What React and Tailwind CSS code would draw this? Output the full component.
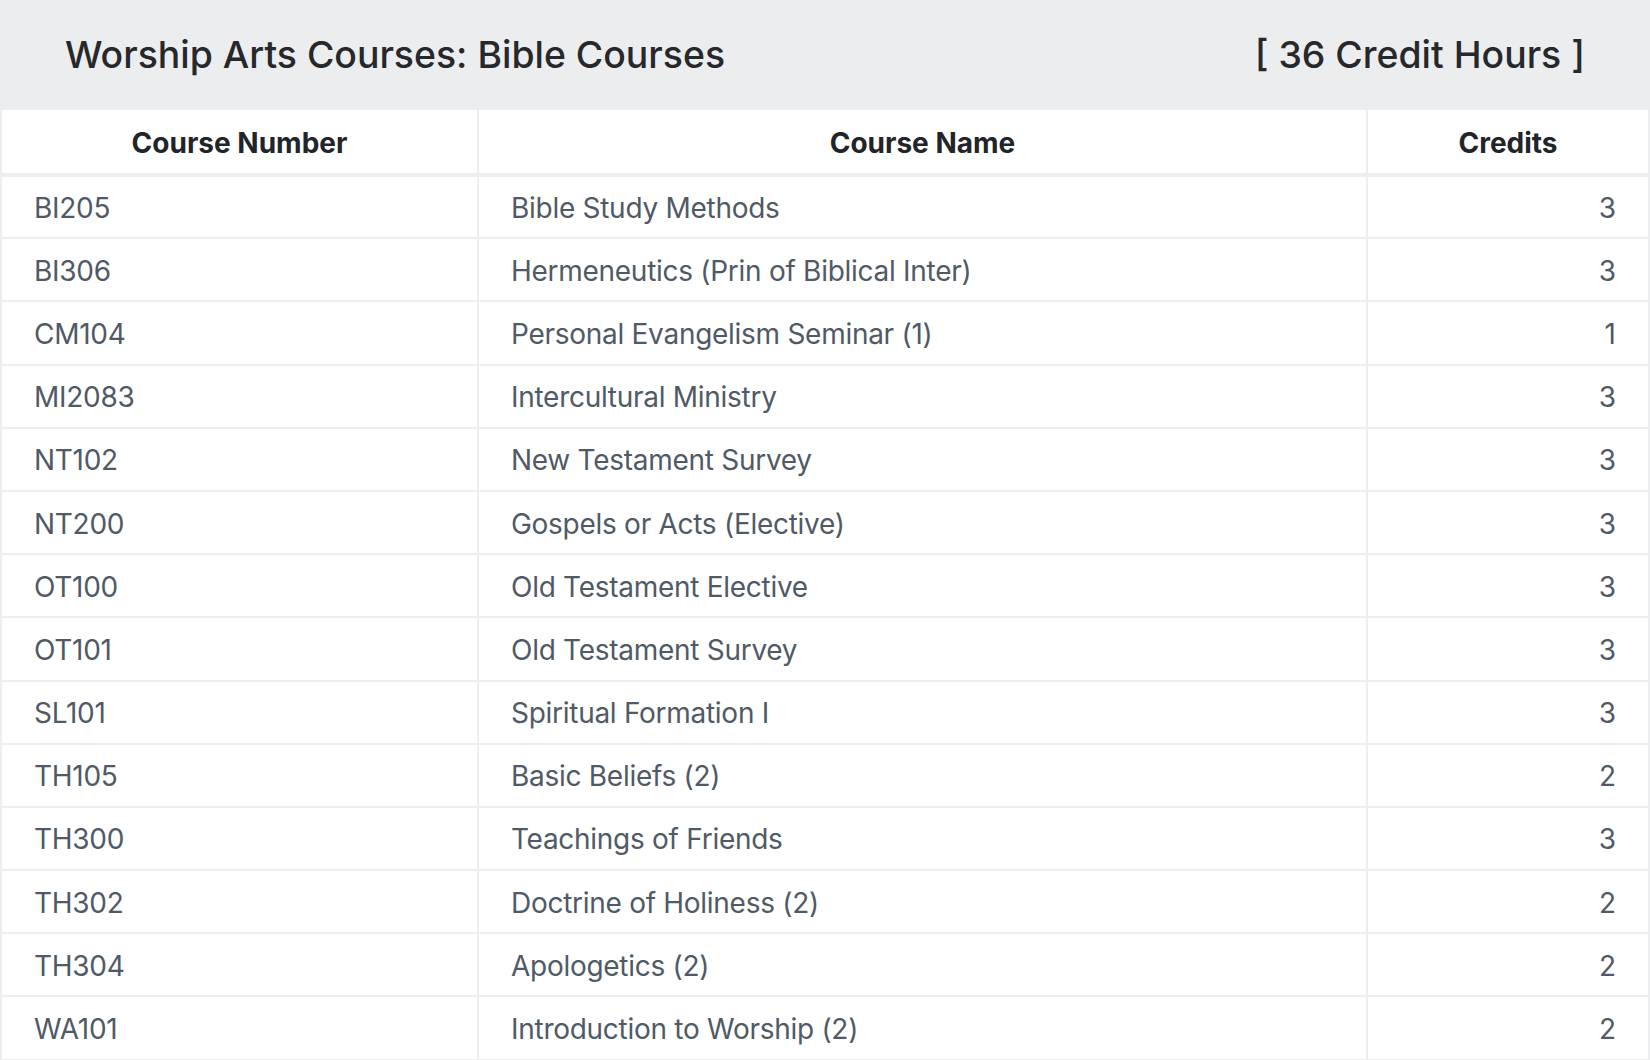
import React from 'react';

const courses = [
    { number: 'BI205', name: 'Bible Study Methods', credits: 3 },
    { number: 'BI306', name: 'Hermeneutics (Prin of Biblical Inter)', credits: 3 },
    { number: 'CM104', name: 'Personal Evangelism Seminar (1)', credits: 1 },
    { number: 'MI2083', name: 'Intercultural Ministry', credits: 3 },
    { number: 'NT102', name: 'New Testament Survey', credits: 3 },
    { number: 'NT200', name: 'Gospels or Acts (Elective)', credits: 3 },
    { number: 'OT100', name: 'Old Testament Elective', credits: 3 },
    { number: 'OT101', name: 'Old Testament Survey', credits: 3 },
    { number: 'SL101', name: 'Spiritual Formation I', credits: 3 },
    { number: 'TH105', name: 'Basic Beliefs (2)', credits: 2 },
    { number: 'TH300', name: 'Teachings of Friends', credits: 3 },
    { number: 'TH302', name: 'Doctrine of Holiness (2)', credits: 2 },
    { number: 'TH304', name: 'Apologetics (2)', credits: 2 },
    { number: 'WA101', name: 'Introduction to Worship (2)', credits: 2 },
];

export default function App() {
    return (
        <div className="min-h-screen bg-white font-['Inter','Liberation_Sans',sans-serif]">
            {/* Section heading */}
            <div className="flex h-[110px] items-center justify-between bg-[#ecedef] px-[65px]">
                <h2 className="text-[37.4px] font-medium text-[#26282b]">Worship Arts Courses: Bible Courses</h2>
                <span className="text-[37.4px] font-medium text-[#26282b]">[ 36 Credit Hours ]</span>
            </div>

            {/* Course table */}
            <table className="w-full border-collapse text-[28px]">
                <colgroup>
                    <col className="w-[477px]" />
                    <col className="w-[889px]" />
                    <col />
                </colgroup>
                <thead>
                    <tr className="h-[65px]">
                        <th className="border-2 border-b-4 border-[#eceef0] border-t-0 pt-0.5 text-center font-bold text-[#212529]">Course Number</th>
                        <th className="border-2 border-b-4 border-[#eceef0] border-t-0 pt-0.5 text-center font-bold text-[#212529]">Course Name</th>
                        <th className="border-2 border-b-4 border-[#eceef0] border-t-0 pt-0.5 text-center font-bold text-[#212529]">Credits</th>
                    </tr>
                </thead>
                <tbody>
                    {courses.map((course) => (
                        <tr key={course.number} className="h-[63.2px]">
                            <td className="border-2 border-[#eceef0] px-[32px] pt-0.5 tracking-[-0.28px] text-[#505a66]">{course.number}</td>
                            <td className="border-2 border-[#eceef0] px-[32px] pt-0.5 tracking-[-0.28px] text-[#505a66]">{course.name}</td>
                            <td className="border-2 border-[#eceef0] px-[32px] pt-0.5 text-right text-[#505a66]">{course.credits}</td>
                        </tr>
                    ))}
                </tbody>
            </table>
        </div>
    );
}
